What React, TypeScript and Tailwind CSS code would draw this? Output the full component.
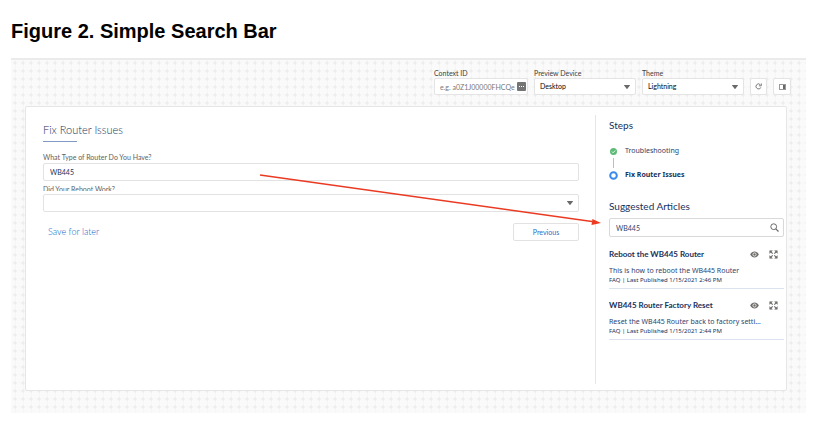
import React, { useState } from "react";

function Caret() {
  return (
    <svg viewBox="0 0 6 4" className="pointer-events-none absolute top-[7px] right-[6px] h-[4px] w-[6px]" aria-hidden="true">
      <path d="M.4 0h5.200c.4 0 .5.300.3.600L3.400 3.800a.5.5 0 0 1-.8 0L.1.600C-.1.300 0 0 .4 0z" fill="#69696c" />
    </svg>
  );
}

function ToolbarSelect({ id, label, options }: { id: string; label: string; options: string[] }) {
  return (
    <div className="w-[102px]">
      <label htmlFor={id} className="block h-[10px] text-[7px] leading-[10px] text-[#3e3e3c]">{label}</label>
      <div className="relative">
        <select id={id} className="block h-[17px] w-full appearance-none rounded-[2px] border border-[#e4e4e4] bg-white px-[5px] text-[7px] leading-[15px] text-[#080707]">
          {options.map((o) => <option key={o}>{o}</option>)}
        </select>
        <Caret />
      </div>
    </div>
  );
}

function Eye() {
  return (
    <svg viewBox="0 0 9 7" className="h-[7px] w-[9px]" aria-hidden="true">
      <path d="M.2 3.500C1.200 1.500 2.700.6 4.500.6s3.300.9 4.300 2.900C7.800 5.500 6.300 6.400 4.500 6.400S1.200 5.500.2 3.500z" fill="#706e6b" />
      <circle cx="4.500" cy="3.500" r="1.600" fill="#706e6b" stroke="#fff" strokeWidth=".8" />
    </svg>
  );
}

function Expand() {
  return (
    <svg viewBox="0 0 10 10" className="h-[9px] w-[9px]" aria-hidden="true" fill="#706e6b" stroke="#706e6b">
      <path d="M.8 3.700V.8h2.900zM6.300.8h2.900v2.900zM9.200 6.300v2.900H6.300zM3.700 9.200H.8V6.300z" strokeWidth=".6" />
      <path d="M1.500 1.500l2.600 2.600M8.500 1.500L5.900 4.100M8.500 8.500L5.900 5.900M1.500 8.500l2.600-2.600" strokeWidth="1.300" />
    </svg>
  );
}

function Article({ title, summary, meta }: { title: string; summary: string; meta: string }) {
  return (
    <article className="h-[42px] border-b border-[#dbe3ee]">
      <div className="flex h-[14px] items-center pr-[6px]">
        <h3 className="flex-1 text-[8px] leading-[14px] font-bold text-[#16325c]">{title}</h3>
        <button aria-label="Preview article" className="mr-[10px]"><Eye /></button>
        <button aria-label="Expand article"><Expand /></button>
      </div>
      <p className="mt-[5px] w-[154px] truncate font-['Noto_Sans',sans-serif] text-[7px] leading-[10px] text-[#2f4570]">{summary}</p>
      <p className="font-['Noto_Sans',sans-serif] text-[6px] leading-[8px] text-[#16325c]">{meta}</p>
    </article>
  );
}

export default function App() {
  const [query, setQuery] = useState("WB445");
  return (
    <main className="bg-white pt-[18px] pb-[15px] font-['Lato','Noto_Sans',sans-serif]">
      <h1 className="ml-[11px] h-10 font-['Liberation_Sans',Arial,sans-serif] text-[20px] leading-[26px] font-bold text-black">Figure 2. Simple Search Bar</h1>

      <section className="mr-5 ml-[11px] border-t-2 border-[#ebebeb] bg-[#fafafa] bg-[radial-gradient(circle_at_4px_3px,#ededed_1px,transparent_2px),linear-gradient(90deg,transparent_4px,#f6f6f6_4px,#f6f6f6_5px,transparent_5px),linear-gradient(transparent_2px,#f8f8f8_2px,#f8f8f8_3px,transparent_3px)] bg-[size:8px_8px] pr-[19px] pb-[22px] pl-[14px]">
        <div className="-mr-1 flex items-end justify-end gap-[6px] pt-2 pb-[11px]">
          <div className="w-[94px]">
            <label htmlFor="context" className="block h-[10px] text-[7px] leading-[10px] text-[#3e3e3c]">Context ID</label>
            <div className="relative">
              <input id="context" placeholder="e.g. a0Z1J00000FHCQe" className="block h-[17px] w-full rounded-[2px] border border-[#e4e4e4] bg-white pr-[10px] pl-[5px] text-[7px] placeholder:text-[#77777a]" />
              <svg viewBox="0 0 9 9" className="absolute top-1 right-[2px] h-[9px] w-[9px]" aria-hidden="true">
                <rect width="9" height="9" rx="1" fill="#757575" />
                <path d="M2 4.500h1M4 4.500h1M6 4.500h1" stroke="#fff" />
              </svg>
            </div>
          </div>
          <ToolbarSelect id="device" label="Preview Device" options={["Desktop", "Tablet", "Phone"]} />
          <ToolbarSelect id="theme" label="Theme" options={["Lightning", "Newport"]} />
          <button aria-label="Refresh" className="flex h-[17px] w-[17px] items-center justify-center rounded-[2px] border border-[#e4e4e4] bg-white">
            <svg viewBox="0 0 8 8" className="h-[7px] w-[7px]" fill="none" stroke="#69696c" aria-hidden="true">
              <path d="M6 1.800A2.900 2.900 0 1 0 6.700 5M7.200.5v2.700H4.500" />
            </svg>
          </button>
          <button aria-label="Toggle panel" className="flex h-[17px] w-[18px] items-center justify-center rounded-[2px] border border-[#e4e4e4] bg-white">
            <svg viewBox="0 0 7 6" className="h-[6px] w-[7px]" aria-hidden="true">
              <rect x=".5" y=".5" width="6" height="5" fill="none" stroke="#9a9a9c" />
              <path d="M4 1h2v4H4z" fill="#69696c" />
            </svg>
          </button>
        </div>

        <div className="relative flex min-h-[285px] rounded-[2px] border border-[#e6e6e6] bg-white">
          <section className="min-w-0 flex-1 pt-4 pr-4 pl-[17px]">
            <h2 className="h-[15px] text-[11px] leading-[14px] font-light text-[#16325c]">Fix Router Issues</h2>
            <div className="mt-[3px] h-px w-[34px] bg-[#7f9ac6]" />
            <label htmlFor="router" className="mt-[10px] block h-[11px] text-[7px] leading-[10px] text-[#5e5f63]">What Type of Router Do You Have?</label>
            <input id="router" defaultValue="WB445" className="block h-[18px] w-full rounded-[2px] border border-[#e2e2e2] px-[6px] text-[7px] text-[#16325c]" />
            <label htmlFor="reboot" className="mt-1 mb-[3px] block h-[6px] overflow-hidden text-[7px] leading-[9px] text-[#5e5f63]">Did Your Reboot Work?</label>
            <div className="relative">
              <select id="reboot" defaultValue="" className="block h-[18px] w-full appearance-none rounded-[2px] border border-[#e2e2e2] bg-white px-[6px] text-[7px]">
                <option value="" />
                <option>Yes</option>
                <option>No</option>
              </select>
              <Caret />
            </div>
            <div className="mt-[11px] flex items-center justify-between pl-[5px]">
              <button className="text-[9px] leading-[18px] font-light text-[#0b63c8]">Save for later</button>
              <button className="h-[18px] w-[66px] rounded-[2px] border border-[#e2e2e2] text-[7px] text-[#2a6ec6]">Previous</button>
            </div>
          </section>

          <aside className="mt-2 mb-[6px] w-[191px] border-l border-[#e6e6e6] pt-[3px] pr-[2px] pl-[13px]">
            <h2 className="text-[10px] leading-[14px] text-[#16325c]">Steps</h2>
            <ol className="mt-[12px] font-['Noto_Sans',sans-serif] text-[7px] text-[#2b3f69]">
              <li className="flex h-[14px] items-center">
                <svg viewBox="0 0 8 8" className="mr-2 ml-px h-[7px] w-[7px]" aria-hidden="true">
                  <circle cx="4" cy="4" r="4" fill="#5dbb76" />
                  <path d="M2.200 4.100l1.300 1.300L6 2.900" fill="none" stroke="#fff" />
                </svg>
                Troubleshooting
              </li>
              <li className="ml-1 h-[10px] w-px bg-[#9cc5f5]" aria-hidden="true" />
              <li className="flex h-[14px] items-center font-bold text-[#16325c]">
                <svg viewBox="0 0 9 9" className="mr-[7px] h-[9px] w-[9px]" aria-hidden="true">
                  <circle cx="4.500" cy="4.500" r="3.300" fill="#fff" stroke="#3a8aee" strokeWidth="2" />
                </svg>
                Fix Router Issues
              </li>
            </ol>
            <h2 className="mt-[17px] text-[10px] leading-[14px] text-[#16325c]">Suggested Articles</h2>
            <div className="relative mt-[5px] mb-[10px]">
              <input type="text" aria-label="Search articles" value={query} onChange={(e) => setQuery(e.target.value)} className="block h-[19px] w-full rounded-[2px] border border-[#d9d9d9] px-[6px] text-[7px] text-[#2f4570]" />
              <svg viewBox="0 0 9 9" className="absolute top-[5px] right-[5px] h-[9px] w-[9px]" fill="none" stroke="#69696c" aria-hidden="true">
                <circle cx="3.700" cy="3.700" r="2.900" />
                <path d="M5.800 5.800l2.700 2.700" strokeWidth="1.200" />
              </svg>
            </div>
            <div className="flex flex-col gap-[9px]">
              <Article title="Reboot the WB445 Router" summary="This is how to reboot the WB445 Router" meta="FAQ | Last Published 1/15/2021 2:46 PM" />
              <Article title="WB445 Router Factory Reset" summary="Reset the WB445 Router back to factory settings" meta="FAQ | Last Published 1/15/2021 2:44 PM" />
            </div>
          </aside>

          <svg viewBox="0 0 344 54" className="pointer-events-none absolute top-[65px] right-[184px] h-[54px] w-[344px]" aria-hidden="true">
            <path d="M2 3L334 49.500" stroke="#ea3a22" strokeWidth="1.400" />
            <path d="M343 51l-9.500 2 .9-6z" fill="#ea3a22" />
          </svg>
        </div>
      </section>
    </main>
  );
}
